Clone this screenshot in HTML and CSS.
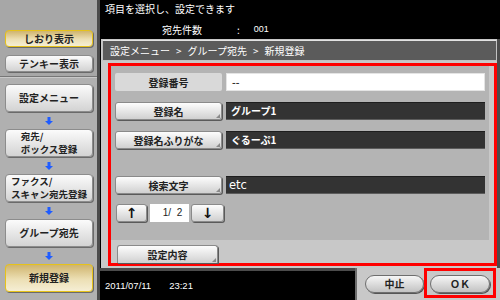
FILE: index.html
```html
<!DOCTYPE html>
<html lang="ja">
<head>
  <meta charset="UTF-8">
  <title>新規登録</title>
  <link rel="stylesheet" href="styles.css">
</head>
<body>
  <div class="screen">

    <!-- left menu -->
    <aside class="side">
      <div class="side-top">
        <div class="btn btn-sel">しおり表示</div>
        <div class="btn">テンキー表示</div>
      </div>
      <div class="flow">
        <div class="btn step">設定メニュー</div>
        <div class="arrow"><svg width="8" height="8" viewBox="0 0 8 8"><path d="M2.5 0h3v4h2.5L4 8 0 4h2.5z"/></svg></div>
        <div class="btn step"><span class="two">宛先/<br>ボックス登録</span></div>
        <div class="arrow"><svg width="8" height="8" viewBox="0 0 8 8"><path d="M2.5 0h3v4h2.5L4 8 0 4h2.5z"/></svg></div>
        <div class="btn step"><span class="two">ファクス/<br>スキャン宛先登録</span></div>
        <div class="arrow"><svg width="8" height="8" viewBox="0 0 8 8"><path d="M2.5 0h3v4h2.5L4 8 0 4h2.5z"/></svg></div>
        <div class="btn step">グループ宛先</div>
        <div class="arrow"><svg width="8" height="8" viewBox="0 0 8 8"><path d="M2.5 0h3v4h2.5L4 8 0 4h2.5z"/></svg></div>
        <div class="btn step btn-sel">新規登録</div>
      </div>
    </aside>

    <main class="main">
      <header class="head">
        <p class="msg">項目を選択し、設定できます</p>
        <p class="count"><span>宛先件数</span><span class="colon">:</span><span class="num">001</span></p>
      </header>

      <div class="frame">
        <div class="crumb">設定メニュー<span class="sep">&gt;</span>グループ宛先<span class="sep">&gt;</span>新規登録</div>
        <div class="focus-box">
          <div class="panel">
            <div class="row">
              <div class="label flat">登録番号</div>
              <div class="value light">--</div>
            </div>
            <div class="row">
              <div class="label key">登録名</div>
              <div class="value">グループ1</div>
            </div>
            <div class="row">
              <div class="label key">登録名ふりがな</div>
              <div class="value">ぐるーぷ1</div>
            </div>
            <div class="row row-far">
              <div class="label key">検索文字</div>
              <div class="value latin">etc</div>
            </div>
            <div class="pager">
              <div class="key page-btn">&#8593;</div>
              <div class="page-num">1/&nbsp;&nbsp;2</div>
              <div class="key page-btn down">&#8595;</div>
            </div>
          </div>
          <div class="key detail-btn">設定内容</div>
        </div>
      </div>

      <footer class="foot">
        <div class="date">2011/07/11<span class="time">23:21</span></div>
        <div class="actions">
          <div class="pill">中止</div>
          <div class="ok-focus"><div class="pill">ＯＫ</div></div>
        </div>
      </footer>
    </main>

  </div>
</body>
</html>
```

FILE: styles.css
```css
body {
    margin: 0;
    background: #000;
    font-family: "Noto Sans CJK JP", "Noto Sans", sans-serif;
}

.screen {
    display: grid;
    grid-template-columns: 100px 400px;
    width: 500px;
    height: 300px;
    overflow: hidden;
}

/* left menu */

.side {
    background: #b0b0b0;
    border-right: 3px solid #4b4b4b;
    display: flex;
    flex-direction: column;
}

.side-top {
    height: 77px;
    box-sizing: border-box;
    padding: 30px 0 0 5px;
    display: flex;
    flex-direction: column;
    gap: 8px;
    background: #a7a7a7;
    border-bottom: 1px solid #777;
}

.flow {
    border-top: 1px solid #c9c9c9;
    padding: 6px 0 0 5px;
    display: flex;
    flex-direction: column;
}

.btn {
    width: 88px;
    height: 17px;
    box-sizing: border-box;
    border: 1px solid #8c8c8c;
    border-radius: 4px;
    background: linear-gradient(#fbfbfb, #d3d3d3);
    box-shadow: 1px 1px 0 #6a6a6a;
    color: #222;
    font-size: 10px;
    font-weight: 700;
    line-height: 12px;
    display: flex;
    align-items: center;
    justify-content: center;
}

.btn-sel {
    border-color: #e6c21a;
    background: linear-gradient(#cfb46e, #ecdfb4 55%, #f5eed4);
}

.step {
    height: 28px;
}

.two {
    text-align: left;
    font-size: 9.5px;
    line-height: 13px;
}

.arrow {
    width: 88px;
    height: 17px;
    display: flex;
    align-items: center;
    justify-content: center;
}

.arrow svg {
    fill: #1f5cff;
}

/* right side */

.main {
    display: flex;
    flex-direction: column;
}

.head {
    height: 39px;
    box-sizing: border-box;
    padding-left: 5px;
    color: #fff;
    font-size: 10px;
    line-height: 13px;
}

.msg {
    margin: 0;
    padding-top: 2px;
}

.count {
    margin: 8px 0 0 57px;
    display: flex;
}

.colon {
    margin-left: 35px;
}

.num {
    margin-left: 14px;
    font-family: "Liberation Sans", sans-serif;
    font-size: 9px;
}

.frame {
    height: 229px;
    margin-left: 1px;
    box-sizing: border-box;
    padding: 1px 0 0 1px;
    background: #c8c8c8;
    border-right: 3px solid #4b4b4b;
    display: flex;
    flex-direction: column;
}

.crumb {
    height: 21px;
    box-sizing: border-box;
    border: 1px solid #c2c2c2;
    border-top-color: #e2e2e2;
    background: #5b5b5b;
    color: #fff;
    font-size: 10px;
    line-height: 19px;
    padding-left: 7px;
}

.sep {
    margin: 0 6px;
}

.focus-box {
    width: 389px;
    height: 203px;
    box-sizing: border-box;
    margin: 2px 0 0 6px;
    border: 3px solid #ff0000;
    display: flex;
    flex-direction: column;
}

.panel {
    width: 378px;
    height: 174px;
    box-sizing: border-box;
    padding: 7px 4px;
    background: #b4b4b4;
}

.row {
    display: grid;
    grid-template-columns: 107px 259px;
    column-gap: 4px;
    height: 18px;
    margin-bottom: 11px;
}

.row-far {
    margin-top: 27px;
    margin-bottom: 10px;
}

.label {
    font-size: 10px;
    font-weight: 700;
    color: #222;
    display: flex;
    align-items: center;
    justify-content: center;
}

.flat {
    background: #d9d9d9;
    border-radius: 2px;
}

.key {
    position: relative;
    box-sizing: border-box;
    border: 1px solid #8a8a8a;
    border-radius: 3px;
    background: linear-gradient(#fdfdfd, #d0d0d0);
    box-shadow: 1px 1px 0 #5a5a5a;
}

.key::after {
    content: "";
    position: absolute;
    right: 1px;
    bottom: 1px;
    border-style: solid;
    border-width: 0 0 4px 4px;
    border-color: transparent transparent #8a8a8a transparent;
}

.value {
    box-sizing: border-box;
    background: #333;
    border-top: 1px solid #1e1e1e;
    border-bottom: 1px solid #5c5c5c;
    color: #fff;
    font-size: 10px;
    font-weight: 700;
    line-height: 16px;
    padding-left: 5px;
}

.value.light {
    background: #fff;
    border: 1px solid #e4e4e4;
    color: #333;
}

.latin {
    font-family: "DejaVu Sans", sans-serif;
    font-weight: 400;
    font-size: 11.5px;
    padding-left: 3px;
}

.pager {
    display: flex;
    height: 18px;
    margin-left: 1px;
}

.page-btn {
    width: 31px;
    font-size: 14px;
    font-weight: 700;
    color: #111;
    display: flex;
    align-items: center;
    justify-content: center;
    font-family: "DejaVu Sans", sans-serif;
}

.page-btn::after {
    display: none;
}

.page-btn.down {
    width: 33px;
    margin-left: 2px;
}

.page-num {
    width: 39px;
    margin-left: 3px;
    box-sizing: border-box;
    padding-left: 6px;
    background: #fff;
    color: #222;
    font-family: "Liberation Sans", sans-serif;
    font-size: 10px;
    line-height: 18px;
    text-align: center;
}

.detail-btn {
    width: 101px;
    height: 18px;
    margin: 5px 0 0 6px;
    border-bottom: none;
    border-radius: 3px 3px 0 0;
    font-size: 10px;
    font-weight: 700;
    color: #222;
    text-align: center;
    line-height: 17px;
}

/* bottom bar */

.foot {
    display: flex;
    height: 32px;
}

.date {
    width: 255px;
    box-sizing: border-box;
    border-top: 3px solid #4b4b4b;
    padding: 9px 0 0 5px;
    color: #fff;
    font-family: "Liberation Sans", sans-serif;
    font-size: 9.5px;
    line-height: 12px;
}

.time {
    margin-left: 18px;
}

.actions {
    flex: 1;
    display: flex;
    align-items: flex-start;
    padding-left: 8px;
    background: #c8c8c8;
    border-left: 2px solid #6c6c6c;
}

.pill {
    width: 59px;
    height: 18px;
    box-sizing: border-box;
    margin-top: 7px;
    border: 1px solid #6e6e6e;
    border-radius: 9px;
    background: linear-gradient(#f6f6f6, #c2c2c2);
    box-shadow: 1px 1px 0 #555;
    color: #222;
    font-size: 10px;
    font-weight: 700;
    line-height: 16px;
    text-align: center;
}

.ok-focus {
    width: 72px;
    height: 30px;
    box-sizing: border-box;
    border: 3px solid #ff0000;
    padding: 1px 0 0 3px;
}

.ok-focus .pill {
    width: 60px;
    margin-top: 3px;
}
```
